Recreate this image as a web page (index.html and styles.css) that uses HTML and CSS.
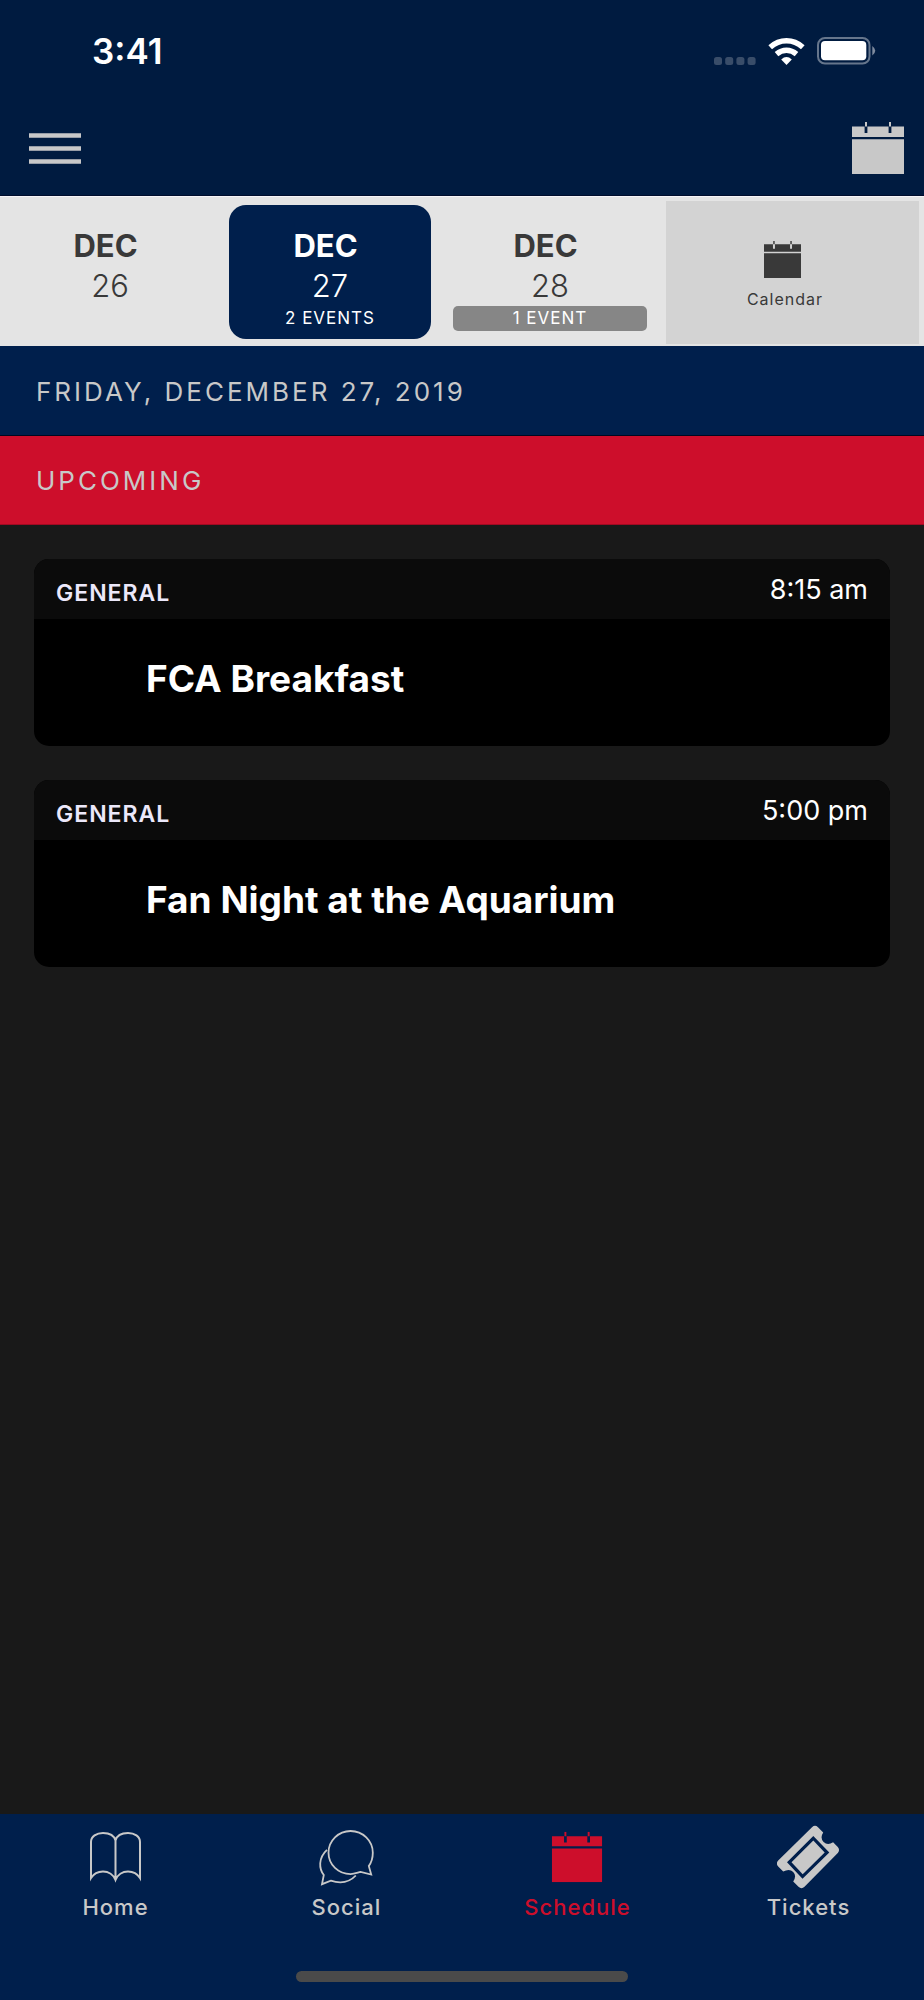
FILE: index.html
```html
<!DOCTYPE html>
<html lang="en">
<head>
<meta charset="utf-8">
<meta name="viewport" content="width=device-width, initial-scale=1">
<title>Schedule</title>
<link rel="stylesheet" href="styles.css">
</head>
<body>
<svg class="sprite" aria-hidden="true">
  <symbol id="calendar" viewBox="0 0 52 52">
    <path fill="currentColor" d="M0 4.500h12.600V11h2.800V4.500h21.200V11h2.800V4.500H52V15H0zM0 17.300h52V52H0zM13 0h2v4.500h-2zM37 0h2v4.500h-2z"/>
  </symbol>
</svg>
<div class="app">
  <header class="top">
    <div class="status">
      <time class="clock">3:41</time>
      <div class="status-icons">
        <svg class="signal" viewBox="0 0 42 8" aria-hidden="true"><g fill="#394d69"><rect width="8" height="8" rx="2.5"/><rect x="11.2" width="8" height="8" rx="2.5"/><rect x="22.4" width="8" height="8" rx="2.5"/><rect x="33.6" width="8" height="8" rx="2.5"/></g></svg>
        <svg class="wifi" viewBox="0 0 37 27" aria-hidden="true"><g fill="none" stroke="#fff" stroke-width="5.4"><path d="M2.2 9.2Q9.4 2.7 18.5 2.7T34.8 9.2"/><path d="M8.5 16.1Q13 12.2 18.5 12.2T28.5 16.1"/></g><path fill="#fff" d="M13.2 21.4q5.3-4.6 10.6 0L18.5 27z"/></svg>
        <svg class="battery" viewBox="0 0 59 28" aria-hidden="true"><rect x="1" y="1" width="51.5" height="25.5" rx="7" fill="none" stroke="#66768c" stroke-width="2"/><rect x="4" y="4" width="45.3" height="19.3" rx="4" fill="#fff"/><path fill="#7f8c9f" d="M55.3 9q6 4.700 0 9.400z"/></svg>
      </div>
    </div>
    <nav class="toolbar" aria-label="Toolbar">
      <button class="icon-button" type="button" aria-label="Menu"><svg class="menu-icon" viewBox="0 0 52 52" aria-hidden="true"><path fill="#c8c8c8" d="M0 11.200h52v4.600H0zM0 24.200h52v4.600H0zM0 37.200h52v4.600H0z"/></svg></button>
      <button class="icon-button" type="button" aria-label="Calendar view"><svg class="toolbar-calendar" aria-hidden="true"><use href="#calendar"/></svg></button>
    </nav>
  </header>

  <div class="dates">
    <button class="day" type="button"><span class="month">DEC</span><span class="date">26</span></button>
    <button class="day selected" type="button" aria-pressed="true"><span class="month">DEC</span><span class="date">27</span><span class="count">2 EVENTS</span></button>
    <button class="day" type="button"><span class="month">DEC</span><span class="date">28</span><span class="count badge">1 EVENT</span></button>
    <button class="open-calendar" type="button"><svg class="small-calendar" aria-hidden="true"><use href="#calendar"/></svg><span>Calendar</span></button>
  </div>

  <h1 class="band">FRIDAY, DECEMBER 27, 2019</h1>
  <h2 class="band upcoming">UPCOMING</h2>

  <main class="events">
    <article class="card">
      <div class="card-head"><span class="category">GENERAL</span><time class="time">8:15 am</time></div>
      <h3 class="title">FCA Breakfast</h3>
    </article>
    <article class="card">
      <div class="card-head"><span class="category">GENERAL</span><time class="time">5:00 pm</time></div>
      <h3 class="title">Fan Night at the Aquarium</h3>
    </article>
  </main>

  <footer class="bottom">
    <nav class="tabs" aria-label="Main">
      <a class="tab" href="#home"><svg class="tab-icon" viewBox="1 0 64 64" aria-hidden="true"><path fill="none" stroke="currentColor" stroke-width="2" d="M32.500 15.500C31 10 26 8 20 8 13.500 8 8 11.500 8 17v36c2.500-4 7-6.500 12-6.500 5.500 0 10.500 3.300 12.500 8.500 2-5.200 7-8.500 12.500-8.500 5 0 9.500 2.500 12 6.500V17c0-5.500-5.500-9-12-9C39 8 34 10 32.500 15.500zV55"/></svg><span>Home</span></a>
      <a class="tab" href="#social"><svg class="tab-icon" viewBox="1 0 64 64" aria-hidden="true"><g fill="none" stroke="currentColor" stroke-width="1.8"><path d="M57.200 49.500L54.800 41c3-4.200 4-8.800 4-13.300C58.800 15.800 48.800 6 36.600 6S14.500 15.800 14.500 27.700s9.900 21.400 22.100 21.400c3.500 0 6.800-1.400 10-2.200z"/><path d="M13 24.800C4 33 5 44 9.800 50L8 59.200l8.800-3.500c10 3.200 18.700 1.500 25-5.200"/></g></svg><span>Social</span></a>
      <a class="tab active" href="#schedule" aria-current="page"><svg class="tab-icon" viewBox="-6 -7 66 66" aria-hidden="true"><use href="#calendar" width="52" height="52"/></svg><span>Schedule</span></a>
      <a class="tab" href="#tickets"><svg class="tab-icon" viewBox="1 0 64 64" aria-hidden="true"><path fill="currentColor" fill-rule="evenodd" d="M36 2.200q3-2.700 6 0l5.200 5.200q-3.500 5.600.4 9.500t9.500.4l4.700 4.700q2.500 3 0 6L28.500 61.800q-3 2.700-6 0l-5.300-5.300q3.800-5.600 0-9.500t-10-.4L2.200 41.600q-2.700-3 0-6zM37.300 11L11 37.200l15.500 16.500L53.300 27.400z"/><path fill="currentColor" d="M37.300 15.500L15.500 37.300 26.700 49.200 48.700 27.400z"/></svg><span>Tickets</span></a>
    </nav>
    <div class="home-indicator"></div>
  </footer>
</div>
</body>
</html>
```
FILE: styles.css
```css
* { box-sizing: border-box; }

body {
  margin: 0;
  background: #191919;
  color: #c8c8c8;
  font-family: Inter, "Liberation Sans", sans-serif;
}

button {
  margin: 0;
  padding: 0;
  border: 0;
  background: none;
  color: inherit;
  font: inherit;
  cursor: pointer;
}

svg { display: block; }
.sprite { position: absolute; width: 0; height: 0; }

.app {
  display: flex;
  flex-direction: column;
  min-height: 100vh;
}

.top {
  background: #001b40;
  border-bottom: 1px solid #000d2c;
}

.status {
  display: flex;
  justify-content: space-between;
  align-items: center;
  height: 101px;
  padding: 0 48px 0 92px;
}

.clock {
  color: #fff;
  font-size: 35px;
  font-weight: 600;
  line-height: 42px;
}

.status-icons { display: flex; align-items: flex-end; gap: 12px; }
.signal { width: 42px; height: 8px; }
.wifi { width: 37px; height: 27px; }
.battery { width: 59px; height: 28px; }

.toolbar {
  display: flex;
  justify-content: space-between;
  padding: 21px 20px 21px 29px;
}

.menu-icon, .toolbar-calendar { width: 52px; height: 52px; }

.dates {
  display: grid;
  grid-template-columns: 220fr 220fr 220fr 264fr;
  height: 150px;
  border-top: 1px solid #f6f4f8;
  background: #e4e4e4;
}

.day {
  display: flex;
  flex-direction: column;
  align-items: stretch;
  margin: 8px 9px 7px;
  padding-top: 21px;
  border-radius: 17px;
  color: #393939;
  text-align: center;
}

.selected { background: #001f4c; color: #fff; }

.month {
  padding-right: 9px;
  font-size: 31px;
  font-weight: 700;
  line-height: 40px;
}

.date {
  font-size: 31px;
  font-weight: 300;
  line-height: 40px;
}

.count {
  margin: 0 4px;
  border-radius: 5px;
  color: #fff;
  font-size: 17px;
  line-height: 25px;
  letter-spacing: 1px;
}

.badge { background: #868686; }

.open-calendar {
  display: flex;
  flex-direction: column;
  align-items: center;
  gap: 11px;
  margin: 4px 5px 2px 6px;
  padding: 40px 15px 0 0;
  background: #d3d3d3;
  color: #393939;
  font-size: 16px;
  line-height: 20px;
  letter-spacing: 1px;
}

.small-calendar { width: 37px; height: 37px; margin-right: 6px; }

.band {
  margin: 0;
  padding: 26px 36px 23px;
  border-bottom: 1px solid #000820;
  background: #001f4c;
  font-size: 26px;
  font-weight: 400;
  line-height: 40px;
  letter-spacing: 3px;
}

.upcoming {
  padding: 25px 36px 23px;
  border-bottom-color: #a00a22;
  background: #cd0e2b;
}

.events {
  display: flex;
  flex: 1;
  flex-direction: column;
  gap: 34px;
  padding: 34px;
}

.card {
  overflow: hidden;
  border-radius: 15px;
  background: #000;
}

.card-head {
  display: flex;
  justify-content: space-between;
  padding: 15px 22px 13px;
  background: #0b0b0b;
}

.category {
  padding-top: 6px;
  color: #ece8fa;
  font-size: 23px;
  font-weight: 600;
  line-height: 26px;
  letter-spacing: 1px;
}

.time {
  color: #fff;
  font-size: 27px;
  line-height: 32px;
}

.title {
  margin: 0;
  padding: 36px 24px 43px 112px;
  color: #fff;
  font-size: 37px;
  font-weight: 700;
  line-height: 48px;
}

.bottom {
  padding-bottom: 18px;
  background: #001f4c;
}

.tabs {
  display: grid;
  grid-template-columns: repeat(4, 1fr);
  padding-top: 11px;
}

.tab {
  display: flex;
  flex-direction: column;
  align-items: center;
  gap: 4px;
  color: #c8c8c8;
  font-size: 22px;
  font-weight: 500;
  line-height: 28px;
  letter-spacing: 1px;
  text-decoration: none;
}

.tab-icon { width: 64px; height: 64px; }
.active { color: #cd0e2b; }

.home-indicator {
  width: 36%;
  height: 11px;
  margin: 50px auto 0;
  border-radius: 6px;
  background: #4a4a4a;
}
```
